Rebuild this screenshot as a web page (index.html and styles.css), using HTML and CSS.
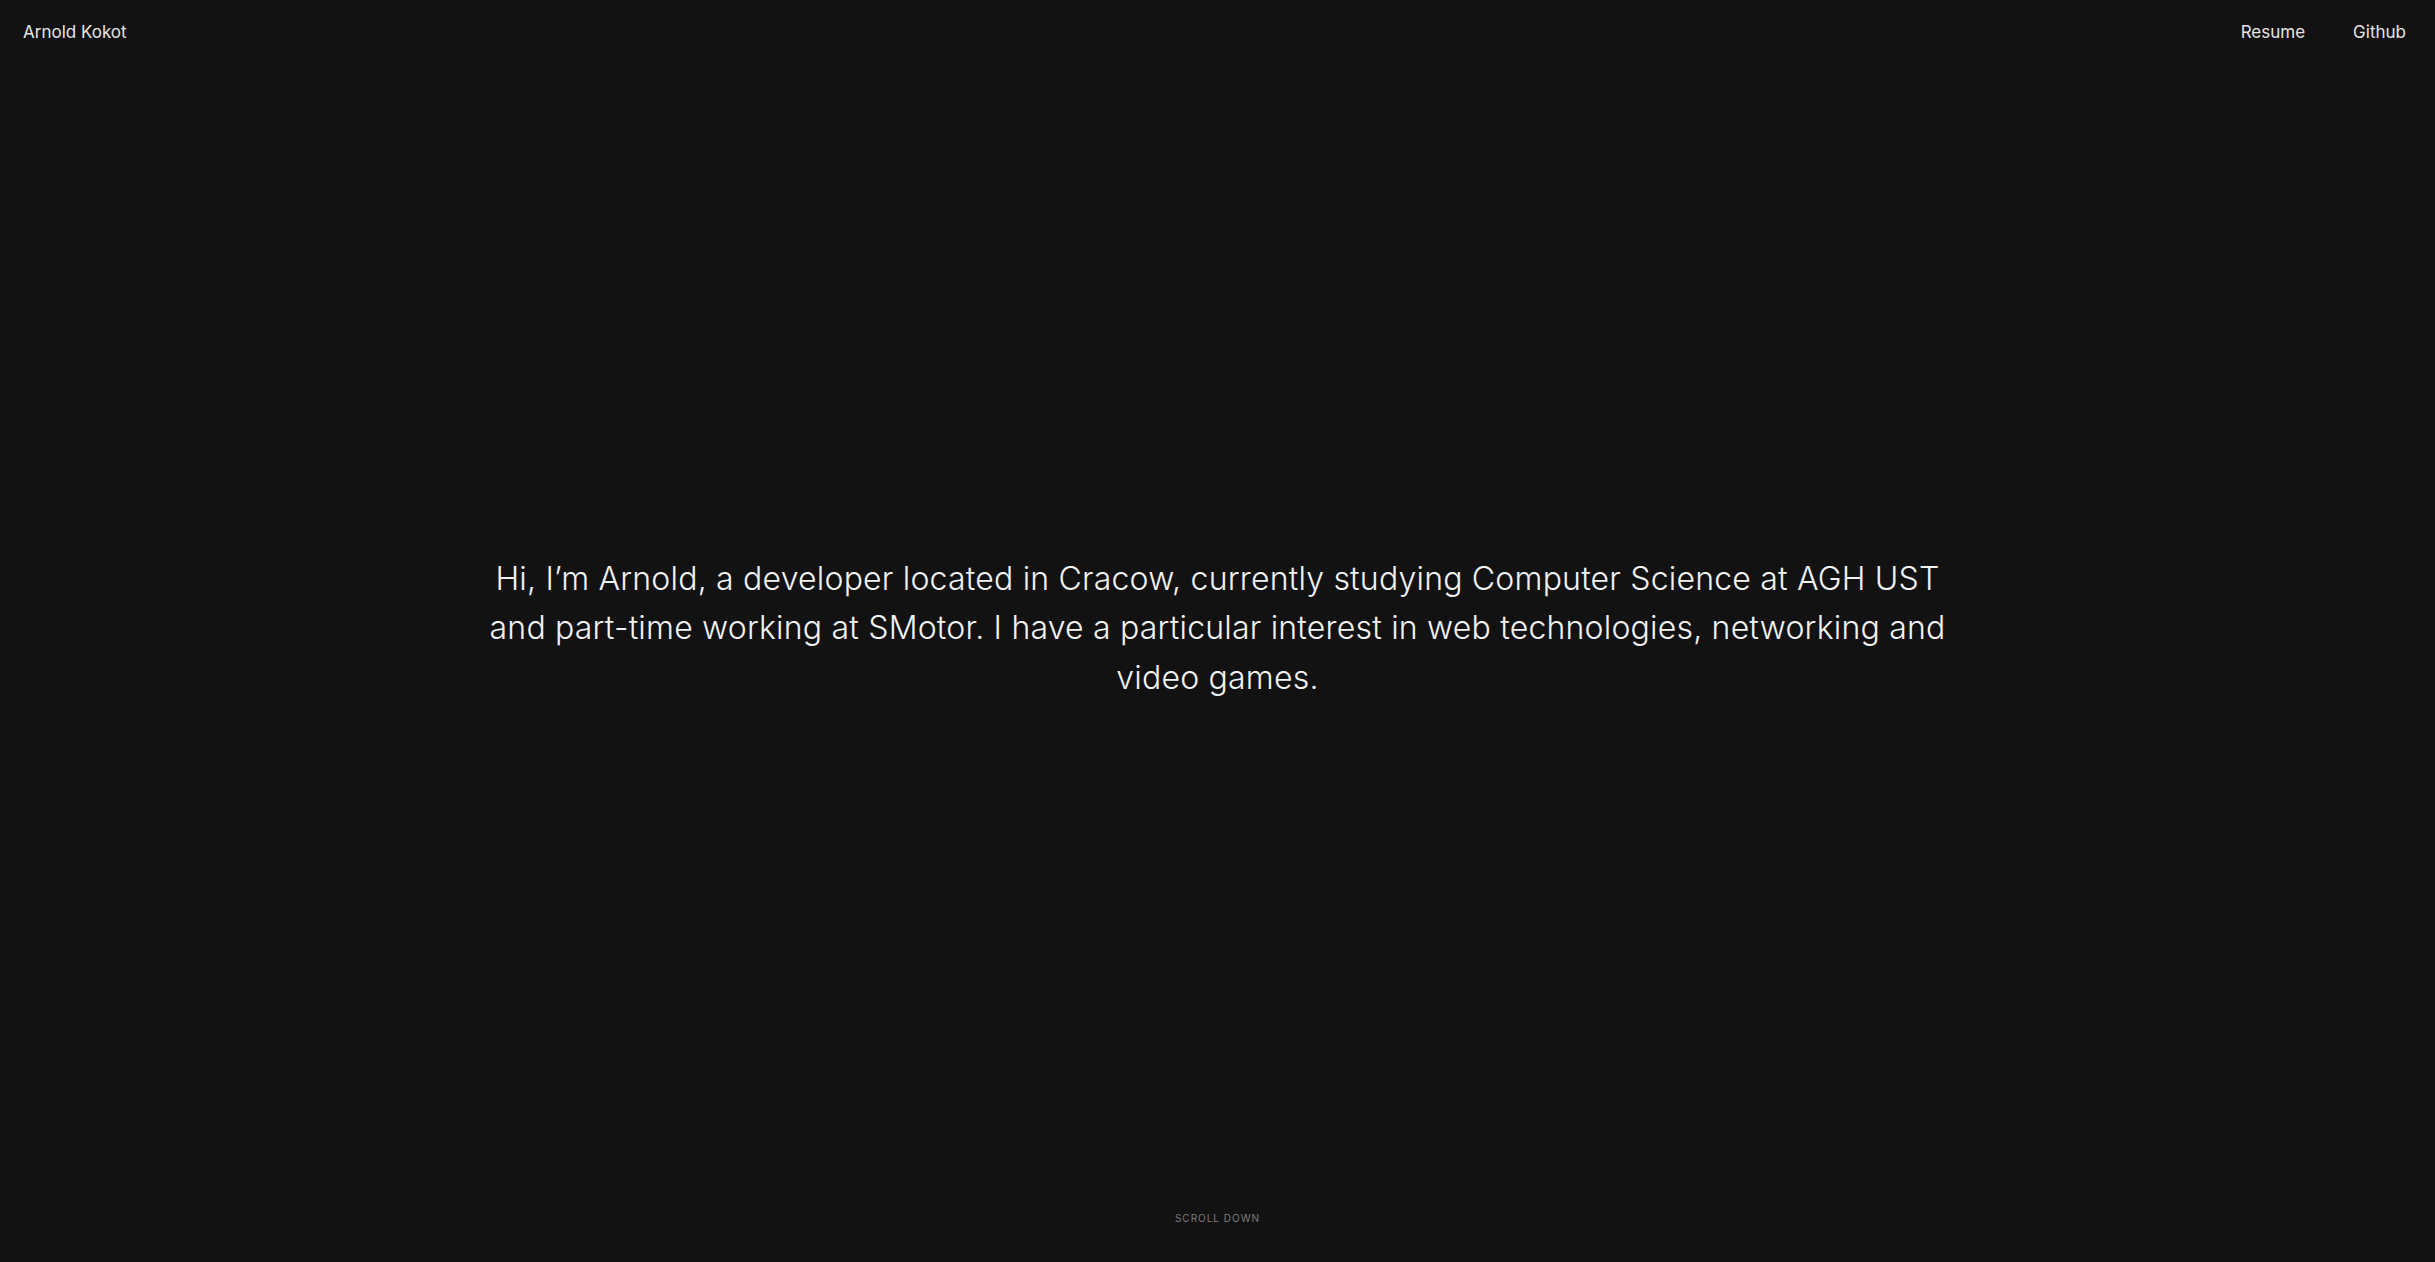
FILE: index.html
```html
<!DOCTYPE html>
<html lang="en">
<head>
<meta charset="utf-8">
<title>Arnold Kokot</title>
<link rel="stylesheet" href="styles.css">
</head>
<body>
<div class="page">
  <header class="topbar">
    <a class="brand" href="#">Arnold Kokot</a>
    <nav class="nav">
      <a href="#">Resume</a>
      <a href="#">Github</a>
    </nav>
  </header>
  <main class="hero">
    <p class="intro">Hi, I’m Arnold, a developer located in Cracow, currently studying Computer Science at AGH UST and part-time working at SMotor. I have a particular interest in web technologies, networking and video games.</p>
  </main>
  <footer class="scroll">SCROLL DOWN</footer>
</div>
</body>
</html>
```
FILE: styles.css
```css
html, body {
  margin: 0;
  padding: 0;
  background: #121212;
  height: 100%;
}
body {
  font-family: Inter, "Open Sans", sans-serif;
  color: #ececec;
}
.page {
  position: relative;
  height: 100vh;
  display: flex;
  flex-direction: column;
}
.topbar {
  position: absolute;
  top: 0;
  left: 0;
  right: 0;
  display: flex;
  justify-content: space-between;
  align-items: center;
  height: 64px;
  padding: 0 29px 0 23px;
}
.topbar a {
  color: #e4e4e4;
  text-decoration: none;
  font-size: 17px;
}
.nav {
  display: flex;
  gap: 48px;
}
.hero {
  flex: 1;
  display: flex;
  align-items: center;
  justify-content: center;
  padding-bottom: 6px;
}
.intro {
  margin: 0;
  max-width: 1492px;
  text-align: center;
  font-size: 32px;
  line-height: 49.6px;
  letter-spacing: 0.2px;
  font-weight: 300;
  color: #f2f2f2;
}
.scroll {
  position: absolute;
  bottom: 38px;
  left: 0;
  right: 0;
  text-align: center;
  font-size: 10px;
  letter-spacing: 1px;
  color: #7c7c7c;
}
```
